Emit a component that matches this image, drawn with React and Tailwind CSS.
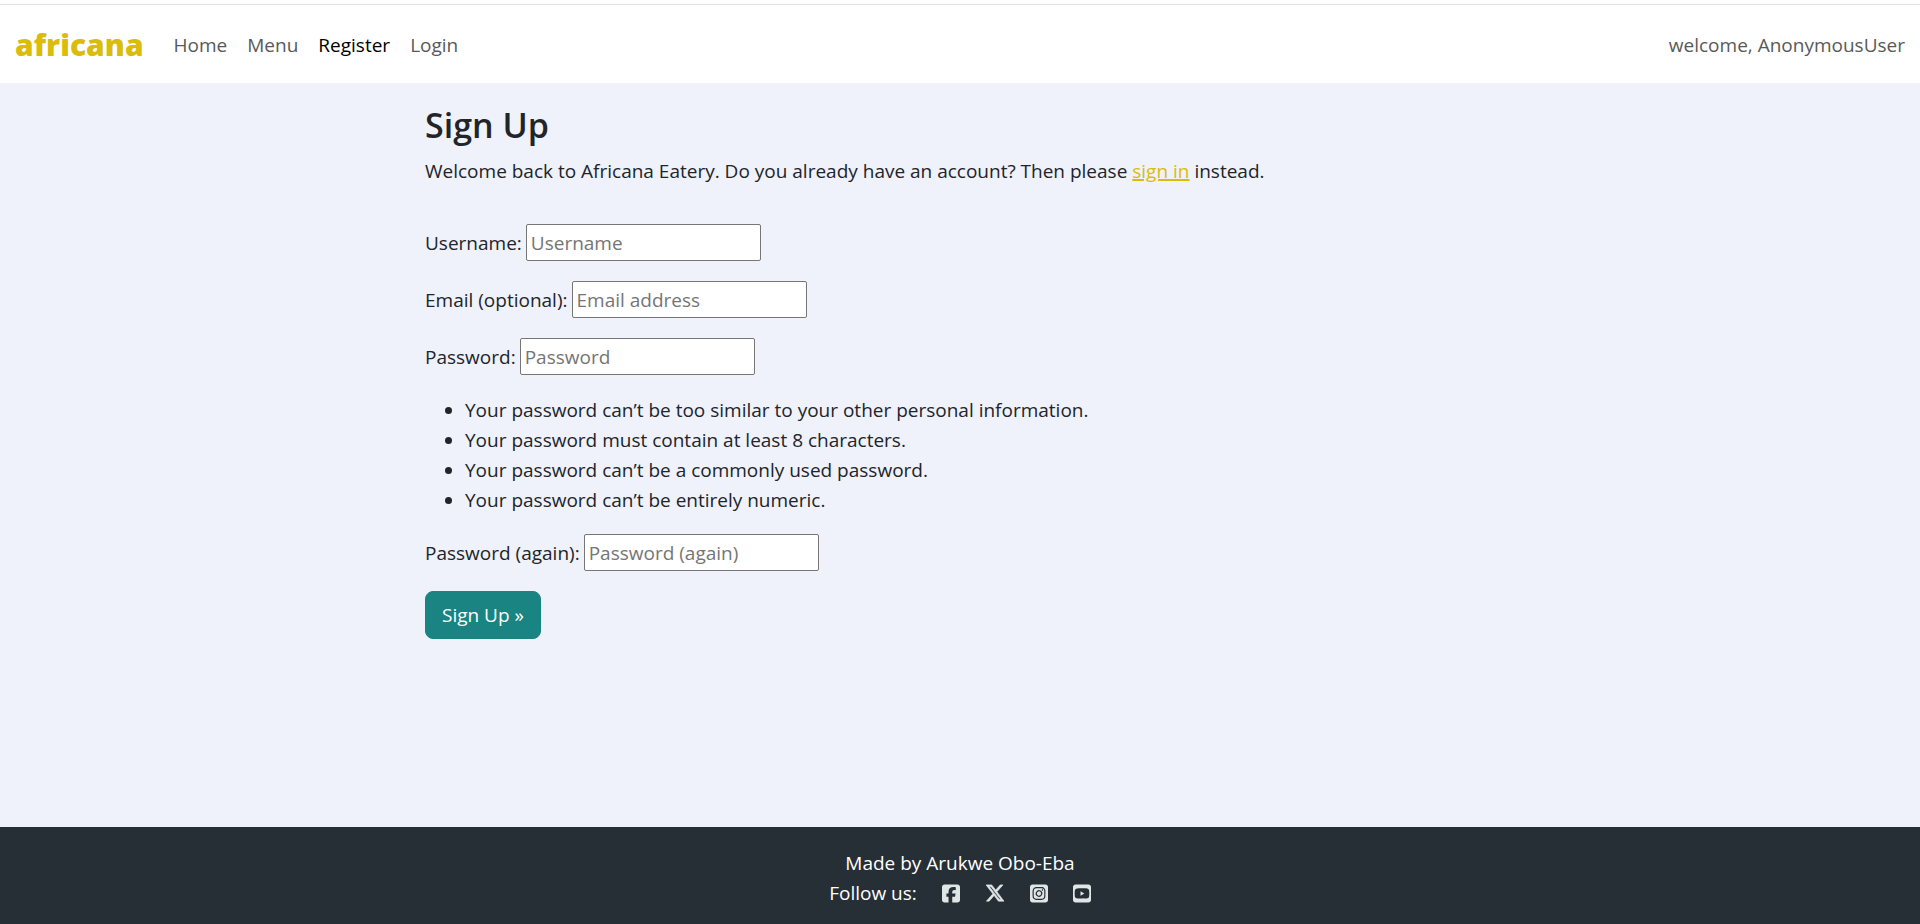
import React from "react";
import { FaSquareFacebook, FaXTwitter, FaSquareInstagram, FaSquareYoutube } from "react-icons/fa6";

const navLinks = [
  { label: "Home", active: false },
  { label: "Menu", active: false },
  { label: "Register", active: true },
  { label: "Login", active: false },
];

const passwordRules = [
  "Your password can’t be too similar to your other personal information.",
  "Your password must contain at least 8 characters.",
  "Your password can’t be a commonly used password.",
  "Your password can’t be entirely numeric.",
];

const socials = [
  { label: "Facebook", Icon: FaSquareFacebook, size: "h-[21px] w-[18px]" },
  { label: "X", Icon: FaXTwitter, size: "size-5 stroke-current stroke-[16px]" },
  { label: "Instagram", Icon: FaSquareInstagram, size: "h-[21px] w-[18px]" },
  { label: "YouTube", Icon: FaSquareYoutube, size: "h-[21px] w-[18px]" },
];

function Field({ id, label, type, placeholder }) {
  return (
    <p className="mb-5 flex items-center gap-1">
      <label htmlFor={id}>{label}</label>
      <input
        id={id}
        type={type}
        placeholder={placeholder}
        className="h-[37px] w-[235px] rounded-[2px] border border-[#767676] bg-white px-1 placeholder:text-[#757575]"
      />
    </p>
  );
}

export default function App() {
  return (
    <div className="flex min-h-screen flex-col bg-[#eff1fb] font-['Open_Sans','Noto_Sans',sans-serif] text-[19px] leading-[30px] font-normal text-[#212529]">
      <header className="bg-white pt-1">
        <nav className="flex h-[79px] items-center border-t border-[#dee2e6] px-[15px] pt-0.5">
          <a href="#" className="mr-[30px] text-[30px] font-extrabold text-[#dbbc0b]">africana</a>
          <ul className="flex flex-1 gap-5">
            {navLinks.map(({ label, active }) => (
              <li key={label}>
                <a href="#" className={active ? "text-black" : "text-[#595959]"}>{label}</a>
              </li>
            ))}
          </ul>
          <span className="text-[#595959]">welcome, AnonymousUser</span>
        </nav>
      </header>

      <main className="mx-auto w-full max-w-[1070px] flex-1 pt-[21px]">
        <h1 className="mb-2.5 text-[34px] leading-[42px] font-semibold">Sign Up</h1>
        <p className="mb-[38px]">
          Welcome back to Africana Eatery. Do you already have an account? Then please{" "}
          <a href="#" className="text-[#dbbc0b] underline decoration-2">sign in</a> instead.
        </p>
        <form>
          <Field id="username" label="Username:" type="text" placeholder="Username" />
          <Field id="email" label="Email (optional):" type="email" placeholder="Email address" />
          <Field id="password" label="Password:" type="password" placeholder="Password" />
          <ul className="mb-[19px] list-disc pl-10">
            {passwordRules.map((rule) => (
              <li key={rule}>{rule}</li>
            ))}
          </ul>
          <Field id="password2" label="Password (again):" type="password" placeholder="Password (again)" />
          <button type="submit" className="rounded-lg border border-[#198481] bg-[#198481] px-4 py-2 text-white">
            Sign Up »
          </button>
        </form>
      </main>

      <footer className="bg-[#262e36] pt-[21px] pb-4 text-center text-white">
        <p>Made by Arukwe Obo-Eba</p>
        <div className="flex items-center justify-center gap-[25px]">
          <span>Follow us:</span>
          {socials.map(({ label, Icon, size }) => (
            <a key={label} href="#" aria-label={label} className="text-[#dfe7e6]">
              <Icon className={size} />
            </a>
          ))}
        </div>
      </footer>
    </div>
  );
}
